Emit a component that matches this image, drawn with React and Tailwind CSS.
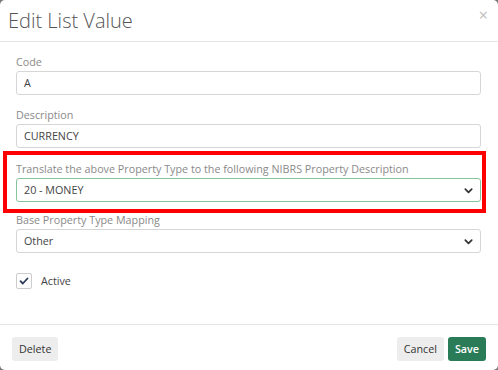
import React from 'react';

function Chevron() {
  return (
    <svg className="w-[11px] h-[11px] text-[#333]" viewBox="0 0 12 12" fill="none">
      <path d="M2.5 4.5l3.5 3.5 3.5-3.5" stroke="currentColor" strokeWidth="1.9" strokeLinecap="round" strokeLinejoin="round" />
    </svg>
  );
}

function Field({ label, children }) {
  return (
    <div>
      <div className="text-[10.75px] leading-[15px] text-[#8a8a8a] mb-[1px]">{label}</div>
      {children}
    </div>
  );
}

function TextInput({ value }) {
  return (
    <div className="h-[24px] border border-[#d6d6d6] rounded-[3px] px-[7px] flex items-center text-[10.75px] text-[#444]">
      {value}
    </div>
  );
}

function Select({ value, focused }) {
  return (
    <div
      className={`h-[24px] border rounded-[3px] pl-[7px] pr-[6px] flex items-center justify-between text-[10.75px] text-[#444] ${
        focused ? 'border-[#86c49d]' : 'border-[#d6d6d6]'
      }`}
    >
      <span>{value}</span>
      <Chevron />
    </div>
  );
}

export default function App() {
  return (
    <div className="w-[498px] h-[370px] bg-[#777] font-['Open_Sans',sans-serif]">
      <div className="w-full h-full bg-white rounded-[5px] flex flex-col overflow-hidden">
        <div className="h-[42px] border-b border-[#e5e5e5] flex items-center justify-between pl-[8px] pr-[10px] shrink-0">
          <h2 className="text-[20px] font-light text-[#555] leading-none mt-[1px]">Edit List Value</h2>
          <span className="text-[16px] text-[#bbb] leading-none -mt-[12px]">×</span>
        </div>

        <div className="flex-1 px-[16px] pt-[13px] pr-[17px]">
          <Field label="Code">
            <TextInput value="A" />
          </Field>
          <div className="mt-[13px]">
            <Field label="Description">
              <TextInput value="CURRENCY" />
            </Field>
          </div>
          <div className="mt-[3px] -ml-[13px] -mr-[5px] border-4 border-[#ff0000] pl-[9px] pr-[1px] pt-[7px] pb-[7px]">
            <Field label="Translate the above Property Type to the following NIBRS Property Description">
              <Select value="20 - MONEY" focused />
            </Field>
          </div>
          <Field label="Base Property Type Mapping">
            <Select value="Other" />
          </Field>
          <div className="mt-[20px] flex items-center gap-[9px]">
            <div className="w-[16px] h-[16px] border border-[#ccc] rounded-[2px] flex items-center justify-center">
              <svg className="w-[10px] h-[10px]" viewBox="0 0 10 10" fill="none">
                <path d="M1.5 5.2l2.3 2.3L8.5 2.5" stroke="#2b3a55" strokeWidth="1.8" strokeLinecap="round" strokeLinejoin="round" />
              </svg>
            </div>
            <span className="text-[10.75px] text-[#444]">Active</span>
          </div>
        </div>

        <div className="h-[46px] border-t border-[#e5e5e5] flex items-start justify-between px-[12px] pt-[12px] shrink-0">
          <button className="h-[24px] px-[7px] bg-[#ededed] rounded-[3px] text-[10.75px] text-[#333]">Delete</button>
          <div className="flex gap-[4px]">
            <button className="h-[24px] px-[7px] bg-[#ededed] rounded-[3px] text-[10.75px] text-[#333]">Cancel</button>
            <button className="h-[24px] px-[7px] bg-[#2a7b58] rounded-[3px] text-[10.75px] font-semibold text-white">Save</button>
          </div>
        </div>
      </div>
    </div>
  );
}
